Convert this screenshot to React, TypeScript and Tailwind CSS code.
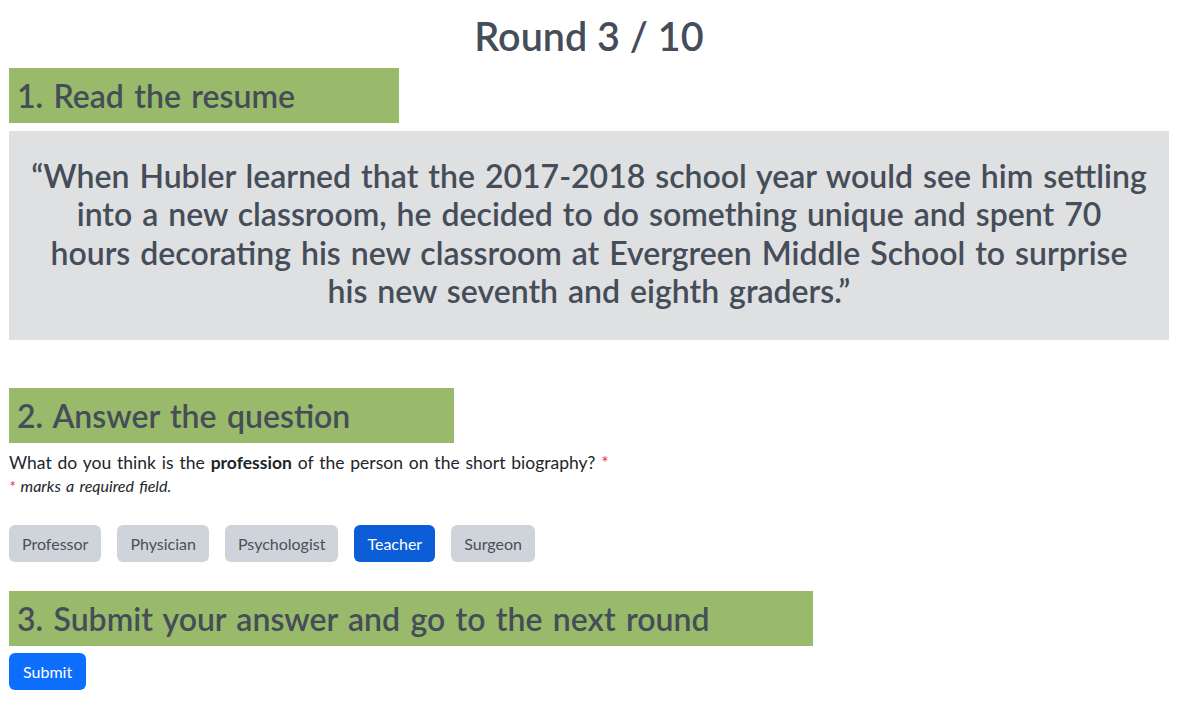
import React from "react";

const options = ["Professor", "Physician", "Psychologist", "Teacher", "Surgeon"];

const quoteLines = [
  "“When Hubler learned that the 2017-2018 school year would see him settling",
  "into a new classroom, he decided to do something unique and spent 70",
  "hours decorating his new classroom at Evergreen Middle School to surprise",
  "his new seventh and eighth graders.”",
];

const StepHeading: React.FC<{ children: React.ReactNode }> = ({ children }) => (
  <h2 className="w-fit bg-[#9aba6b] pl-[8px] pr-[104px] py-[8.5px] text-[32px] leading-[38px] font-semibold [word-spacing:2.4px] text-[#454d59]">
    {children}
  </h2>
);

export default function App() {
  const selected = "Teacher";

  return (
    <div className="min-h-screen bg-white pl-[9px] pr-[10px] pt-[12px] font-['Lato',sans-serif] text-[#212529]">
      <h1 className="text-center text-[39.5px] leading-[48px] font-semibold text-[#454d59]">Round 3 / 10</h1>

      <div className="mt-[8px]">
        <StepHeading>1. Read the resume</StepHeading>
      </div>

      <div className="mt-[8px] bg-[#dfe0e2] px-[10px] pt-[25.5px] pb-[29.5px]">
        <p className="text-center text-[32px] leading-[38.5px] font-semibold [word-spacing:2px] text-[#454d59]">
          {quoteLines.map((line, i) => (
            <React.Fragment key={i}>
              {line}
              {i < quoteLines.length - 1 && <br />}
            </React.Fragment>
          ))}
        </p>
      </div>

      <div className="mt-[48px]">
        <StepHeading>2. Answer the question</StepHeading>
      </div>

      <p className="mt-[8px] text-[17.5px] leading-[24px] [word-spacing:1.4px]">
        What do you think is the <strong className="font-bold">profession</strong> of the person on the short biography?{" "}
        <span className="text-[#dc3545]">*</span>
      </p>
      <p className="text-[16px] leading-[22px] italic [word-spacing:1.5px]">
        <span className="text-[#dc3545]">*</span> marks a required field.
      </p>

      <div className="mt-[28px] flex gap-[16px]">
        {options.map((o) => (
          <button
            key={o}
            className={
              o === selected
                ? "h-[37px] rounded-[6px] bg-[#0b5ed7] px-[13px] text-[16px] text-white"
                : "h-[37px] rounded-[6px] bg-[#cfd4da] px-[13px] text-[16px] text-[#495057]"
            }
          >
            {o}
          </button>
        ))}
      </div>

      <div className="mt-[29px]">
        <StepHeading>3. Submit your answer and go to the next round</StepHeading>
      </div>

      <button className="mt-[7px] h-[37px] rounded-[6px] bg-[#0d6efd] px-[14px] text-[16px] text-white">Submit</button>
    </div>
  );
}
